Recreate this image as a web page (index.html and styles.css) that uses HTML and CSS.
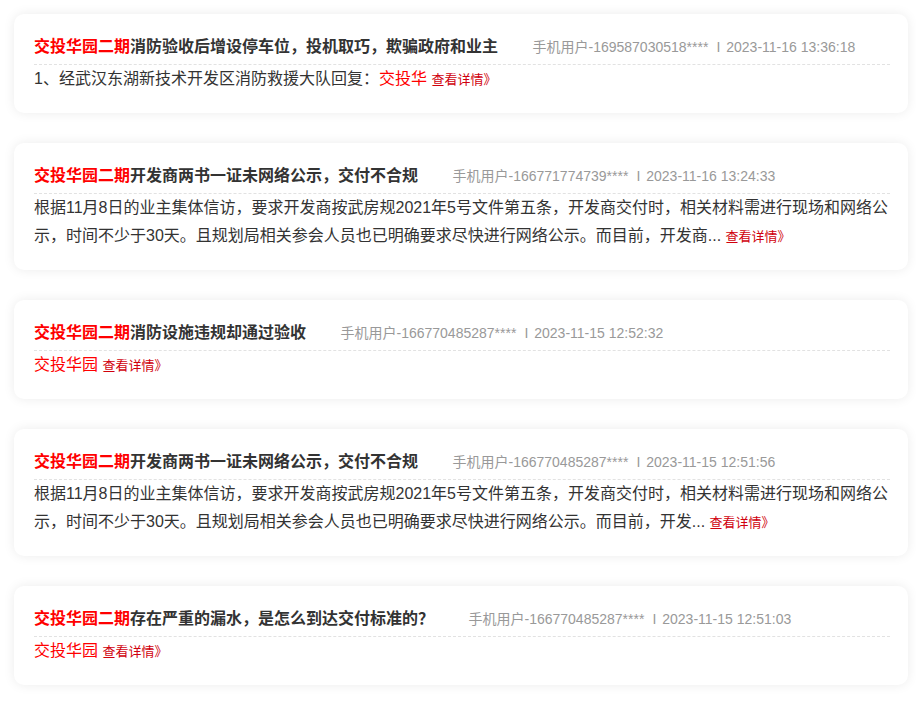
FILE: index.html
```html
<!DOCTYPE html>
<html>
	<head>
		<meta charset="UTF-8">
		<title>投诉列表</title>
		<link rel="stylesheet" href="styles.css">
	</head>
	<body>
		<div class="list">
			<div class="item">
				<div class="item-hd">
					<span class="item-title"><em>交投华园二期</em>消防验收后增设停车位，投机取巧，欺骗政府和业主</span>
					<span class="item-meta">手机用户-169587030518****<i>I</i>2023-11-16 13:36:18</span>
				</div>
				<div class="item-bd">
					1、经武汉东湖新技术开发区消防救援大队回复：<span class="hl">交投华</span> <a class="more" href="#">查看详情》</a>
				</div>
			</div>
			<div class="item">
				<div class="item-hd">
					<span class="item-title"><em>交投华园二期</em>开发商两书一证未网络公示，交付不合规</span>
					<span class="item-meta">手机用户-166771774739****<i>I</i>2023-11-16 13:24:33</span>
				</div>
				<div class="item-bd">
					根据11月8日的业主集体信访，要求开发商按武房规2021年5号文件第五条，开发商交付时，相关材料需进行现场和网络公示，时间不少于30天。且规划局相关参会人员也已明确要求尽快进行网络公示。而目前，开发商... <a class="more" href="#">查看详情》</a>
				</div>
			</div>
			<div class="item">
				<div class="item-hd">
					<span class="item-title"><em>交投华园二期</em>消防设施违规却通过验收</span>
					<span class="item-meta">手机用户-166770485287****<i>I</i>2023-11-15 12:52:32</span>
				</div>
				<div class="item-bd">
					<span class="hl">交投华园</span> <a class="more" href="#">查看详情》</a>
				</div>
			</div>
			<div class="item">
				<div class="item-hd">
					<span class="item-title"><em>交投华园二期</em>开发商两书一证未网络公示，交付不合规</span>
					<span class="item-meta">手机用户-166770485287****<i>I</i>2023-11-15 12:51:56</span>
				</div>
				<div class="item-bd">
					根据11月8日的业主集体信访，要求开发商按武房规2021年5号文件第五条，开发商交付时，相关材料需进行现场和网络公示，时间不少于30天。且规划局相关参会人员也已明确要求尽快进行网络公示。而目前，开发... <a class="more" href="#">查看详情》</a>
				</div>
			</div>
			<div class="item">
				<div class="item-hd">
					<span class="item-title"><em>交投华园二期</em>存在严重的漏水，是怎么到达交付标准的？</span>
					<span class="item-meta">手机用户-166770485287****<i>I</i>2023-11-15 12:51:03</span>
				</div>
				<div class="item-bd">
					<span class="hl">交投华园</span> <a class="more" href="#">查看详情》</a>
				</div>
			</div>
		</div>
	</body>
</html>
```

FILE: styles.css
```css
*{margin: 0;padding: 0;}
body{
	font-family: "Liberation Sans", "Noto Sans CJK SC", sans-serif;
	font-size: 16px;
	color: #333;
	background: #fff;
}
a{text-decoration: none;}
em,i{font-style: normal;}
.list{
	padding: 14px 8px 14px 14px;
	display: flex;
	flex-direction: column;
	gap: 30px;
}
.item{
	background: #fff;
	border-radius: 10px;
	box-shadow: 0 0 12px rgba(0,0,0,0.08);
	padding: 21px 18px 19px 20px;
}
.item-hd{
	line-height: 24px;
	padding-bottom: 5px;
	border-bottom: 1px dashed #e2e2e2;
	white-space: nowrap;
}
.item-title{
	font-weight: bold;
	color: #333;
}
.item-title em{
	color: #f00;
}
.item-meta{
	margin-left: 30px;
	font-size: 14px;
	color: #999;
}
.item-meta i{
	margin: 0 6px 0 8px;
}
.item-bd{
	line-height: 28px;
	color: #333;
}
.item-bd .hl{
	color: #f00;
}
.item-bd .more{
	font-size: 13px;
	color: #d0000c;
}
```
